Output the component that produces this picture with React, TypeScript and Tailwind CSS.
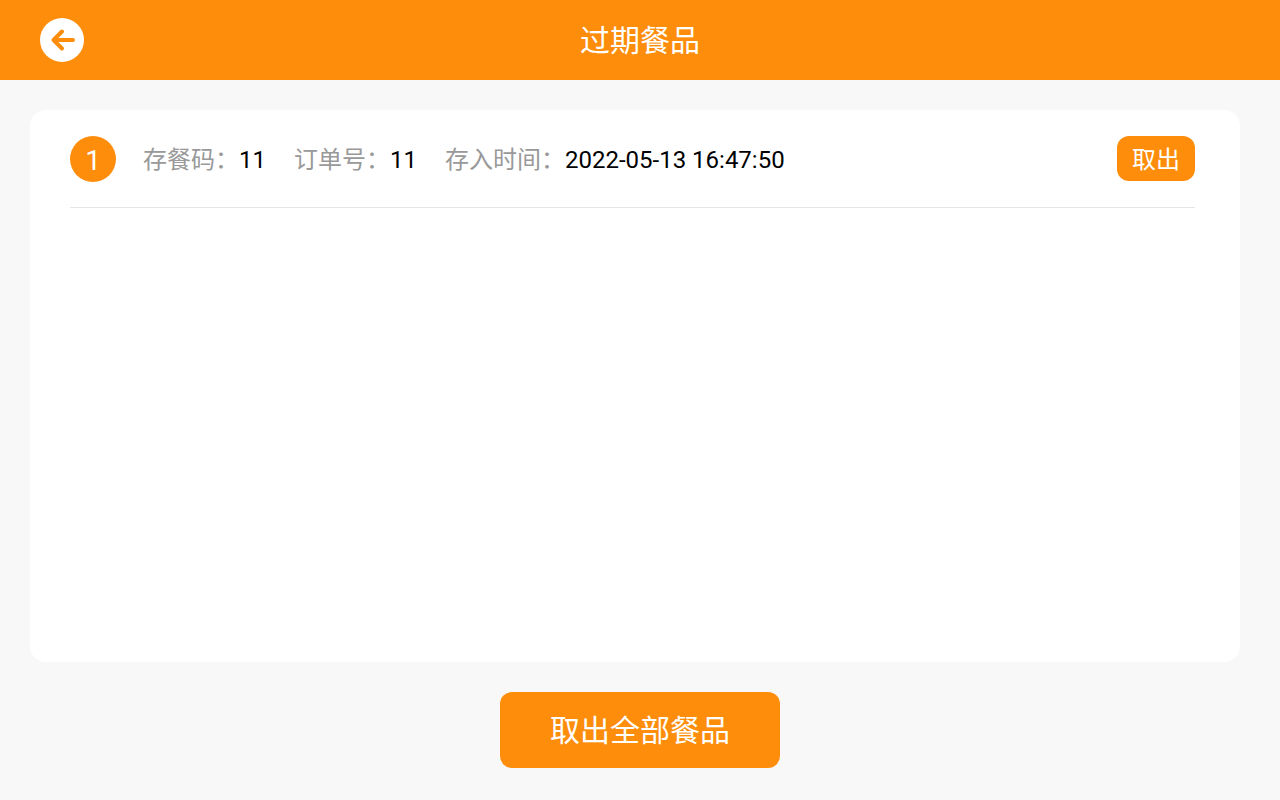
interface Meal {
  id: number
  code: string
  orderNo: string
  storedAt: string
}

const initialMeals: Meal[] = [
  { id: 1, code: '11', orderNo: '11', storedAt: '2022-05-13 16:47:50' },
]

function Field({ label, value }: { label: string; value: string }) {
  return (
    <div className="flex">
      <dt className="text-[#999999]">{label}：</dt>
      <dd className="text-black">{value}</dd>
    </div>
  )
}

export default function App() {
  return (
    <div className="flex min-h-screen flex-col bg-[#f8f8f8] font-[Roboto,'Noto_Sans_CJK_SC',sans-serif]">
      <header className="grid h-20 grid-cols-[1fr_auto_1fr] items-center bg-[#fd8d0b] px-10">
        <button type="button" aria-label="返回" className="size-11 rounded-full bg-white">
          <svg viewBox="0 0 44 44" className="size-11" fill="none" stroke="#fd8d0b" strokeWidth="4" strokeLinecap="round" strokeLinejoin="round">
            <path d="M33 22H13.500M22 13.500L13.500 22L22 30.500" />
          </svg>
        </button>
        <h1 className="text-[30px] text-white">过期餐品</h1>
      </header>

      <main className="mt-[30px] mr-10 ml-[30px] flex-1 rounded-2xl bg-white pr-[45px] pl-10">
        <ul>
          {initialMeals.map((meal, index) => (
            <li key={meal.id} className="flex items-start border-b border-[#e5e5e5] pt-[26px] pb-[23px] text-2xl leading-[48px]">
              <span className="size-[46px] rounded-full bg-[#fd8d0b] text-center text-[28px] leading-[50px] text-white">
                {index + 1}
              </span>
              <dl className="ml-[27px] flex gap-7">
                <Field label="存餐码" value={meal.code} />
                <Field label="订单号" value={meal.orderNo} />
                <Field label="存入时间" value={meal.storedAt} />
              </dl>
              <button type="button" className="ml-auto h-[45px] rounded-xl bg-[#fd8d0b] px-[15px] pt-0.5 leading-8 text-white">
                取出
              </button>
            </li>
          ))}
        </ul>
      </main>

      <footer className="flex justify-center pt-[30px] pb-8">
        <button type="button" className="h-[76px] rounded-xl bg-[#fd8d0b] px-[50px] text-[30px] text-white">
          取出全部餐品
        </button>
      </footer>
    </div>
  )
}
